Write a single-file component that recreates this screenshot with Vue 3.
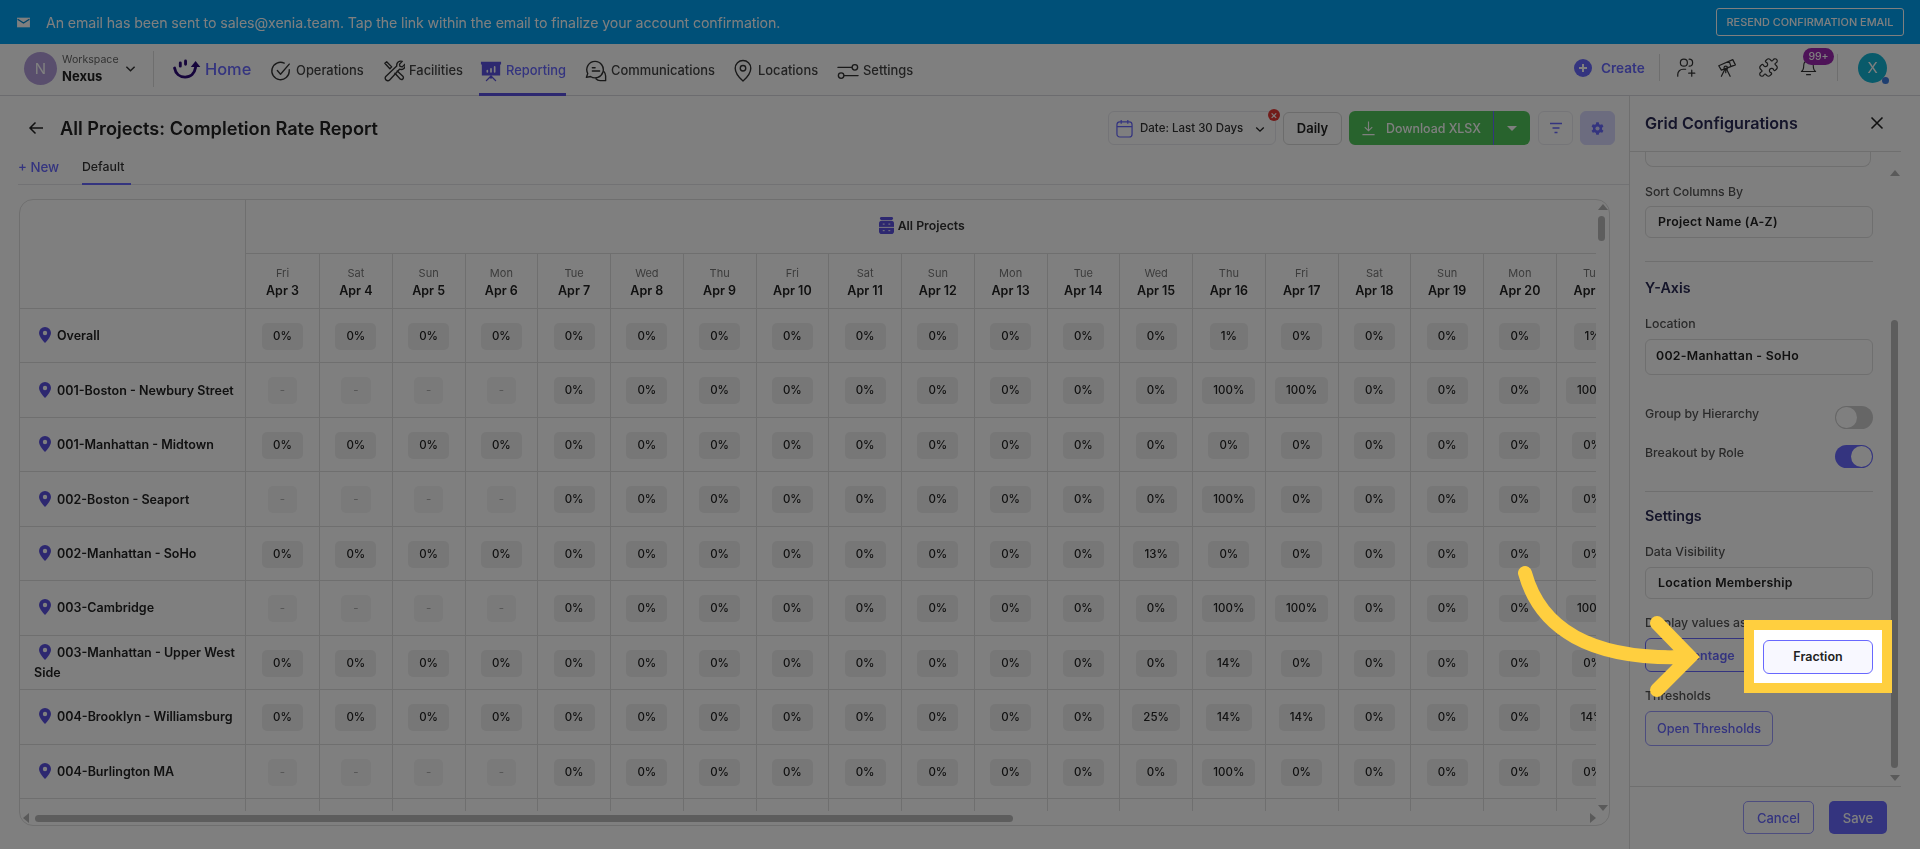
<template>
  <div class="app">
    <div class="page">
      <!-- banner -->
      <div class="banner">
        <svg class="mail" viewBox="0 0 14 14"><path d="M1 2.5h12v9H1z" fill="#fff" /><path d="M1.5 4l5.5 3.5L12.5 4" fill="none" stroke="#0288d1" stroke-width="1.3" /></svg>
        <span class="banner-text">An email has been sent to sales@xenia.team. Tap the link within the email to finalize your account confirmation.</span>
        <button class="resend">RESEND CONFIRMATION EMAIL</button>
      </div>

      <!-- top nav -->
      <header class="nav">
        <div class="workspace">
          <div class="ws-avatar">N</div>
          <div class="ws-text">
            <div class="ws-label">Workspace</div>
            <div class="ws-name">Nexus</div>
          </div>
          <svg class="ws-chev" viewBox="0 0 12 8"><path d="M1.5 1.5L6 6l4.5-4.5" /></svg>
        </div>
        <div class="home">
          <svg class="home-icon" viewBox="0 0 30 22">
            <path d="M2.5 9.5c1 6 5.5 9.500 11 9.500 6 0 10-4 11-10" />
            <path d="M8.5 4v3.5M14 2v3.500" />
            <path class="home-head" d="M24.5 2l5 6.5h-10z" />
          </svg>
          <span>Home</span>
        </div>
        <div
          v-for="item in navItems"
          :key="item.label"
          class="nav-item"
          :class="{ active: item.active }"
          :style="{ width: item.width + 'px' }"
        >
          <svg class="nav-icon" viewBox="0 0 24 24">
            <path v-for="d in item.icon" :key="d" :d="d" />
            <path v-for="d in item.solid || []" :key="d" :d="d" class="solid" />
            <path v-for="d in item.cut || []" :key="d" :d="d" class="cut" />
          </svg>
          <span>{{ item.label }}</span>
        </div>

        <div class="nav-right">
          <svg class="create-icon" viewBox="0 0 18 18"><circle cx="9" cy="9" r="9" /><path d="M9 5v8M5 9h8" /></svg>
          <span class="create">Create</span>
          <div class="nav-sep"></div>
          <svg class="tool" viewBox="0 0 24 24"><circle cx="9" cy="6.5" r="4" /><path d="M15 2.5a4 4 0 0 1 0 8M2 22v-2a6 6 0 0 1 6-6h3M18 15v7M14.5 18.5h7" /></svg>
          <svg class="tool" viewBox="0 0 24 24"><path d="M2 10l16-7 3 6-16 6zM14 5l2 6M11 14l4 8M9 14l-4 8M10 15v3" /><circle cx="10" cy="12.5" r="2" /></svg>
          <svg class="tool" viewBox="0 0 24 24"><path d="M19.439 7.85c-.049.322.059.648.289.878l1.568 1.568c.47.47.706 1.087.706 1.704s-.235 1.233-.706 1.704l-1.611 1.611a.98.98 0 0 1-.837.276c-.47-.07-.802-.48-.968-.925a2.501 2.501 0 1 0-3.214 3.214c.446.166.855.497.925.968a.979.979 0 0 1-.276.837l-1.61 1.61a2.404 2.404 0 0 1-1.705.707 2.402 2.402 0 0 1-1.704-.706l-1.568-1.568a1.026 1.026 0 0 0-.877-.29c-.493.074-.84.504-1.02.968a2.5 2.5 0 1 1-3.237-3.237c.464-.18.894-.527.967-1.02a1.026 1.026 0 0 0-.289-.877l-1.568-1.568A2.402 2.402 0 0 1 1.998 12c0-.617.236-1.234.706-1.704L4.23 8.77c.24-.24.581-.353.917-.303.515.077.877.528 1.073 1.01a2.5 2.5 0 1 0 3.259-3.259c-.482-.196-.933-.558-1.01-1.073-.05-.336.062-.676.303-.917l1.525-1.525A2.402 2.402 0 0 1 12 1.998c.617 0 1.234.236 1.704.706l1.568 1.568c.23.23.556.338.877.29.493-.074.84-.504 1.02-.968a2.5 2.5 0 1 1 3.237 3.237c-.464.18-.894.527-.967 1.02Z" /></svg>
          <div class="bell">
            <svg class="tool" viewBox="0 0 24 24"><path d="M12 3a6 6 0 0 0-6 6c0 6-3 8-3 8h18s-3-2-3-8a6 6 0 0 0-6-6zM9.5 21h5" /></svg>
            <span class="badge">99+</span>
          </div>
          <div class="nav-sep last"></div>
          <div class="user">X<span class="user-dot"></span></div>
        </div>
      </header>

      <div class="content">
        <main class="main">
          <div class="title-row">
            <svg class="back" viewBox="0 0 16 14"><path d="M15 7H2M7.5 1.500L2 7l5.500 5.500" /></svg>
            <h1>All Projects: Completion Rate Report</h1>
            <div class="date-box">
              <svg class="cal" viewBox="0 0 18 20"><rect x="1" y="3" width="16" height="16" rx="3" /><path d="M1 8h16M5.500 1v4M12.500 1v4" /></svg>
              <span>Date: Last 30 Days</span>
              <svg class="date-chev" viewBox="0 0 12 8"><path d="M1.5 1.5L6 6l4.5-4.5" /></svg>
              <span class="clear">×</span>
            </div>
            <button class="daily">Daily</button>
            <div class="download">
              <div class="dl-main">
                <svg class="dl-icon" viewBox="0 0 16 16"><path d="M8 1v9.500M4 7l4 4 4-4M1.500 15h13" /></svg>
                Download XLSX
              </div>
              <div class="dl-caret"><i></i></div>
            </div>
            <button class="icon-btn">
              <svg viewBox="0 0 14 12"><path d="M1 1.5h12M3.5 6h7M5.5 10.500h3" /></svg>
            </button>
            <button class="icon-btn gear">
              <svg viewBox="0 0 24 24"><path d="M10 2h4l.6 3 2 1.1 2.9-1 2 3.500-2.300 2v2.800l2.300 2-2 3.500-2.900-1-2 1.100-.6 3h-4l-.6-3-2-1.100-2.900 1-2-3.500 2.300-2v-2.800l-2.300-2 2-3.500 2.900 1 2-1.100z" /><circle cx="12" cy="12" r="3.3" class="gear-hole" /></svg>
            </button>
          </div>

          <div class="tabs">
            <span class="tab-new">+ New</span>
            <span class="tab-default">Default</span>
          </div>

          <section class="card">
            <div class="scroller">
              <div class="grid">
                <div class="corner"></div>
                <div class="group-head">
                  <svg class="stack" viewBox="0 0 16 18"><rect x="1" y="0" width="14" height="3" rx="1.5" /><rect x="0" y="4" width="16" height="14" rx="3" /><path class="stack-cut" d="M0 11h16M4 7.5h2M4 14.5h2M10 7.5h2M10 14.5h2" /></svg>
                  All Projects
                </div>
                <div v-for="d in days" :key="d.date" class="day-head">
                  <div class="day">{{ d.day }}</div>
                  <div class="date">{{ d.date }}</div>
                </div>
                <template v-for="row in rows" :key="row.name">
                  <div class="loc">
                    <div class="loc-name">
                      <svg class="pin" viewBox="0 0 12 16"><path d="M6 0a6 6 0 0 0-6 6c0 4 6 10 6 10s6-6 6-10a6 6 0 0 0-6-6z" /><circle cx="6" cy="6" r="2.2" /></svg>{{ row.name }}
                    </div>
                  </div>
                  <div v-for="(v, i) in row.values" :key="i" class="cell">
                    <span class="pill" :class="{ none: v === '-' }">{{ v }}</span>
                  </div>
                </template>
                <div class="loc"></div>
                <div v-for="d in days" :key="d.date + 'x'" class="cell"></div>
              </div>
            </div>
            <div class="vrail">
              <i class="arrow up"></i>
              <div class="vthumb"></div>
              <i class="arrow down"></i>
            </div>
            <div class="hrail">
              <i class="arrow left"></i>
              <div class="hthumb"></div>
              <i class="arrow right"></i>
            </div>
          </section>
        </main>

        <!-- config panel -->
        <aside class="panel">
          <div class="panel-head">
            <span>Grid Configurations</span>
            <svg class="close" viewBox="0 0 14 14"><path d="M1.5 1.5l11 11M12.5 1.5l-11 11" /></svg>
          </div>
          <div class="panel-body">
            <div class="form">
              <div class="clipped"></div>
              <div class="label sort">Sort Columns By</div>
              <div class="select first">Project Name (A-Z)</div>
              <div class="divider d1"></div>
              <div class="section yaxis">Y-Axis</div>
              <div class="label loc-label">Location</div>
              <div class="select tall">002-Manhattan - SoHo</div>
              <div class="toggle-row group">
                <span class="label">Group by Hierarchy</span>
                <span class="toggle"></span>
              </div>
              <div class="toggle-row breakout">
                <span class="label">Breakout by Role</span>
                <span class="toggle on"></span>
              </div>
              <div class="divider d2"></div>
              <div class="section settings">Settings</div>
              <div class="label vis">Data Visibility</div>
              <div class="select first">Location Membership</div>
              <div class="label disp">Display values as</div>
              <div class="seg">
                <button class="seg-btn">Percentage</button>
                <button class="seg-btn blank"></button>
              </div>
              <div class="label disp">Thresholds</div>
              <button class="open-btn">Open Thresholds</button>
            </div>
            <div class="prail">
              <i class="arrow up"></i>
              <div class="pthumb"></div>
              <i class="arrow down"></i>
            </div>
          </div>
          <div class="panel-foot">
            <button class="cancel">Cancel</button>
            <button class="save">Save</button>
          </div>
        </aside>
      </div>
    </div>

    <!-- dim layer + highlighted step -->
    <div class="dim"></div>
    <svg class="pointer" viewBox="0 0 1920 849">
      <path d="M1525 573C1540 628 1590 660 1685 657M1657 623l33 34-33 33" />
    </svg>
    <div class="spot">
      <button class="fraction">Fraction</button>
    </div>
  </div>
</template>

<script setup>
const navItems = [
  {
    label: 'Operations',
    width: 113,
    icon: ['M21 10.5V12a9.5 9.5 0 1 1-5.5-8.6', 'M8 11.5l3.5 4L21 4.5'],
  },
  {
    label: 'Facilities',
    width: 97,
    icon: [
      'M2 3.5L4 2l5.5 5.5-2 2zM13 14.5l6 6.5a2.2 2.2 0 0 0 3-3l-6.500-6',
      'M15 6.5a4.5 4.5 0 0 1 6-5l-3 3 .5 2.5 2.5.5 3-3a4.5 4.5 0 0 1-6 5.5L7.5 21.5a2.7 2.7 0 0 1-4.5-3.5z',
    ],
  },
  {
    label: 'Reporting',
    width: 105,
    active: true,
    icon: ['M12 17v3M7 22.5l5-5 5 5'],
    solid: ['M1 2h22v3h-1v12H2V5H1z'],
    cut: ['M8 13v-1.5M12 13V9.5M16 13V7.5'],
  },
  {
    label: 'Communications',
    width: 147,
    icon: [
      'M11 1.5a9 9 0 0 0-8 13.2L1.500 19l4.500-1A9 9 0 1 0 11 1.500z',
      'M8 8.5h3M8 12h8',
      'M20.5 12.5c1 1 2 3 2 5v5h-6c-2 0-3.500-.7-4.500-2',
    ],
  },
  {
    label: 'Locations',
    width: 105,
    icon: ['M12 23s8.5-7.5 8.5-14a8.5 8.5 0 1 0-17 0c0 6.5 8.5 14 8.5 14z', 'M15 9a3 3 0 1 1-6 0 3 3 0 0 1 6 0z'],
  },
  {
    label: 'Settings',
    width: 82,
    icon: ['M1 8h15M22.5 8a3 3 0 1 1-6 0 3 3 0 0 1 6 0z', 'M23 17H8M7.5 17a3 3 0 1 1-6 0 3 3 0 0 1 6 0z'],
  },
]

const names = ['Fri', 'Sat', 'Sun', 'Mon', 'Tue', 'Wed', 'Thu']
const days = Array.from({ length: 19 }, (_, i) => ({
  day: names[i % 7],
  date: 'Apr ' + (i + 3),
}))

// values that are not 0%, keyed by the date number
const makeRow = (name, empty, special = {}) => ({
  name,
  values: days.map((_, i) => {
    const date = i + 3
    if (empty && date < 7) return '-'
    return special[date] || '0%'
  }),
})

const rows = [
  makeRow('Overall', false, { 16: '1%', 21: '1%' }),
  makeRow('001-Boston - Newbury Street', true, { 16: '100%', 17: '100%', 21: '100%' }),
  makeRow('001-Manhattan - Midtown', false),
  makeRow('002-Boston - Seaport', true, { 16: '100%' }),
  makeRow('002-Manhattan - SoHo', false, { 15: '13%' }),
  makeRow('003-Cambridge', true, { 16: '100%', 17: '100%', 21: '100%' }),
  makeRow('003-Manhattan - Upper West Side', false, { 16: '14%' }),
  makeRow('004-Brooklyn - Williamsburg', false, { 15: '25%', 16: '14%', 17: '14%', 21: '14%' }),
  makeRow('004-Burlington MA', true, { 16: '100%' }),
]
</script>

<style>
html, body {
  margin: 0;
  background: #808080;
}
</style>

<style scoped>
.app {
  position: relative;
  width: 1920px;
  height: 849px;
  overflow: hidden;
  font-family: Inter, "Open Sans", sans-serif;
  color: #222;
}
.page {
  width: 1920px;
  height: 849px;
  display: flex;
  flex-direction: column;
  background: #fff;
  filter: blur(0.6px);
}
button {
  font-family: inherit;
  background: #fff;
  cursor: pointer;
  padding: 0;
}

/* banner */
.banner {
  height: 44px;
  flex: none;
  box-sizing: border-box;
  background: #00a0f0;
  display: flex;
  align-items: center;
  padding: 0 16px;
  color: #fff;
}
.mail {
  width: 15px;
  height: 15px;
}
.banner-text {
  margin-left: 15px;
  font-size: 14.2px;
  letter-spacing: -0.1px;
}
.resend {
  margin-left: auto;
  width: 188px;
  height: 28px;
  background: transparent;
  border: 1px solid #fff;
  border-radius: 3px;
  color: #fff;
  font-size: 10.9px;
  font-weight: 500;
}

/* nav */
.nav {
  height: 52px;
  flex: none;
  box-sizing: border-box;
  border-bottom: 1px solid #d8d8de;
  display: flex;
  align-items: center;
  padding-left: 24px;
}
.workspace {
  display: flex;
  align-items: center;
  width: 129px;
  height: 36px;
  border-right: 1px solid #ddd;
  margin-top: -2px;
}
.ws-avatar {
  width: 33px;
  height: 33px;
  border-radius: 50%;
  background: #b39ddb;
  color: #fff;
  font-size: 15px;
  display: flex;
  align-items: center;
  justify-content: center;
  flex: none;
}
.ws-text {
  margin-left: 5px;
  width: 62px;
}
.ws-label {
  font-size: 10.6px;
  color: #666;
  line-height: 15px;
}
.ws-name {
  font-size: 13px;
  font-weight: 700;
  line-height: 18px;
  color: #222;
}
.ws-chev {
  width: 11px;
  height: 8px;
  margin-left: 1px;
  fill: none;
  stroke: #333;
  stroke-width: 1.6;
}
.home {
  display: flex;
  align-items: center;
  margin-left: 18px;
  width: 98px;
  font-size: 16.4px;
  font-weight: 500;
  color: #6868fe;
  margin-top: -1px;
}
.home-icon {
  width: 29px;
  height: 21px;
  margin-right: 4px;
  fill: none;
  stroke: #2c0a78;
  stroke-width: 3;
  stroke-linecap: round;
}
.home-head {
  fill: #2c0a78;
  stroke: none;
}
.nav-item {
  height: 51px;
  margin-top: 1px;
  padding-top: 1px;
  box-sizing: border-box;
  display: flex;
  align-items: center;
  font-size: 12.9px;
  font-weight: 500;
  color: #444;
  position: relative;
}
.nav-icon {
  width: 22px;
  height: 24px;
  flex: none;
  margin-right: 4px;
  fill: none;
  stroke: #333;
  stroke-width: 1.5;
  stroke-linecap: round;
  stroke-linejoin: round;
}
.nav-icon .solid {
  fill: #5a50e0;
  stroke: none;
}
.nav-icon .cut {
  stroke: #fff;
  stroke-width: 1.8;
}
.nav-item.active {
  color: #6868fe;
}
.nav-item.active .nav-icon {
  stroke: #5a50e0;
}
.nav-item.active::after {
  content: "";
  position: absolute;
  left: -1px;
  bottom: 0;
  width: 87px;
  height: 3px;
  background: #5a50e0;
}
.nav-right {
  margin-left: auto;
  display: flex;
  align-items: center;
  margin-top: -4px;
  padding-right: 33px;
}
.create-icon {
  width: 18px;
  height: 18px;
}
.create-icon circle {
  fill: #6868fe;
}
.create-icon path {
  stroke: #fff;
  stroke-width: 2;
}
.create {
  margin-left: 9px;
  font-size: 13.6px;
  font-weight: 600;
  color: #6868fe;
  width: 46px;
}
.nav-sep {
  width: 1px;
  height: 27px;
  background: #ddd;
  margin: 0 16px 0 12px;
}
.nav-sep.last {
  margin: 0 20px;
}
.tool {
  width: 21px;
  height: 21px;
  margin-right: 20px;
  fill: none;
  stroke: #333;
  stroke-width: 1.4;
  stroke-linecap: round;
  stroke-linejoin: round;
}
.bell {
  position: relative;
  width: 18px;
  height: 21px;
}
.bell .tool {
  margin: 0;
  width: 19px;
}
.badge {
  position: absolute;
  left: 4px;
  top: -9px;
  width: 31px;
  height: 17px;
  border-radius: 9px;
  background: #9c27b0;
  color: #fff;
  font-size: 10.5px;
  font-weight: 500;
  line-height: 17px;
  text-align: center;
}
.user {
  position: relative;
  width: 29px;
  height: 30px;
  border-radius: 50%;
  background: #12b5d5;
  color: #fff;
  font-size: 15px;
  display: flex;
  align-items: center;
  justify-content: center;
}
.user-dot {
  position: absolute;
  right: -2px;
  bottom: -1px;
  width: 7px;
  height: 7px;
  border-radius: 50%;
  background: #3c7de0;
}

/* main area */
.content {
  flex: 1;
  display: flex;
  min-height: 0;
}
.main {
  width: 1629px;
  flex: none;
  display: flex;
  flex-direction: column;
}
.title-row {
  height: 34px;
  margin-top: 15px;
  display: flex;
  align-items: center;
  padding: 0 14px 0 28px;
}
.back {
  width: 16px;
  height: 14px;
  fill: none;
  stroke: #222;
  stroke-width: 1.5;
}
h1 {
  margin: 0 0 0 16px;
  font-size: 18.2px;
  font-weight: 600;
  color: #222;
  flex: 1;
}
.date-box {
  position: relative;
  width: 168px;
  height: 34px;
  box-sizing: border-box;
  border: 1px solid #e8e8ee;
  border-radius: 6px;
  display: flex;
  align-items: center;
  padding-left: 7px;
  font-size: 11.5px;
  font-weight: 500;
  color: #333;
}
.cal {
  width: 17px;
  height: 19px;
  margin-right: 7px;
  fill: none;
  stroke: #6868fe;
  stroke-width: 1.3;
}
.date-chev {
  width: 10px;
  height: 7px;
  position: absolute;
  right: 10px;
  top: 14px;
  fill: none;
  stroke: #222;
  stroke-width: 1.6;
}
.clear {
  position: absolute;
  right: -5px;
  top: -3px;
  width: 12px;
  height: 12px;
  border-radius: 50%;
  background: #e53935;
  color: #fff;
  font-size: 11px;
  line-height: 12px;
  text-align: center;
}
.daily {
  margin-left: 7px;
  width: 59px;
  height: 33px;
  border: 1px solid #d8d8d8;
  border-radius: 6px;
  font-size: 13px;
  font-weight: 600;
  color: #222;
}
.download {
  margin-left: 7px;
  width: 181px;
  height: 34px;
  display: flex;
  border-radius: 6px;
  overflow: hidden;
  background: #50c65a;
  color: #fff;
  font-size: 12.4px;
  font-weight: 500;
}
.dl-main {
  width: 145px;
  display: flex;
  align-items: center;
  padding-left: 12px;
  box-sizing: border-box;
  border-right: 1px solid #6868fe;
}
.dl-icon {
  width: 15px;
  height: 16px;
  margin-right: 10px;
  fill: none;
  stroke: #fff;
  stroke-width: 1.2;
}
.dl-caret {
  flex: 1;
  display: flex;
  align-items: center;
  justify-content: center;
}
.dl-caret i {
  border: 5px solid transparent;
  border-top: 5px solid #fff;
  margin-top: 5px;
}
.icon-btn {
  margin-left: 8px;
  width: 35px;
  height: 34px;
  border: 1px solid #ebebf0;
  border-radius: 6px;
  display: flex;
  align-items: center;
  justify-content: center;
}
.icon-btn svg {
  width: 14px;
  height: 12px;
  fill: none;
  stroke: #6868fe;
  stroke-width: 1.5;
}
.icon-btn.gear {
  margin-left: 7px;
  background: #d8d8ff;
  border-color: #d8d8ff;
}
.icon-btn.gear svg {
  width: 15px;
  height: 15px;
  fill: #6868fe;
  stroke: none;
}
.gear-hole {
  fill: #d8d8ff;
}
.tabs {
  height: 36px;
  margin: 4px 0 0 18px;
  box-sizing: border-box;
  border-bottom: 1px solid #e4e4e8;
  display: flex;
  align-items: center;
  font-size: 13.3px;
  font-weight: 500;
}
.tab-new {
  color: #6868fe;
  width: 64px;
}
.tab-default {
  height: 36px;
  box-sizing: border-box;
  width: 49px;
  line-height: 36px;
  border-bottom: 2px solid #6868fe;
  color: #333;
  font-size: 12.3px;
}

/* table */
.card {
  margin: 14px 0 0 19px;
  width: 1591px;
  height: 627px;
  box-sizing: border-box;
  border: 1px solid #dedede;
  border-radius: 14px;
  overflow: hidden;
  display: grid;
  grid-template-columns: 1576px 1fr;
  grid-template-rows: 611px 1fr;
}
.scroller {
  overflow: hidden;
}
.grid {
  display: grid;
  grid-template-columns: 226px 74px repeat(18, 72.75px);
  grid-template-rows: 54px 55px repeat(10, 54.45px);
}
.corner {
  grid-row: span 2;
  border-right: 1px solid #dedede;
  border-bottom: 1px solid #dedede;
}
.group-head {
  grid-column: span 19;
  display: flex;
  align-items: center;
  justify-content: center;
  padding: 0 32px 3px 0;
  font-size: 12.3px;
  font-weight: 600;
  color: #333;
  border-bottom: 1px solid #dedede;
}
.stack {
  width: 15px;
  height: 17px;
  margin-right: 4px;
  fill: #5a50e0;
}
.stack-cut {
  stroke: #fff;
  stroke-width: 1;
}
.day-head {
  text-align: center;
  border-right: 1px solid #dedede;
  border-bottom: 1px solid #dedede;
  padding-top: 10px;
  box-sizing: border-box;
}
.day {
  font-size: 11px;
  color: #777;
  line-height: 18px;
}
.date {
  font-size: 12.5px;
  font-weight: 600;
  color: #222;
  line-height: 18px;
}
.loc {
  border-right: 1px solid #dedede;
  border-bottom: 1px solid #dedede;
  display: flex;
  align-items: center;
  padding: 1px 8px 0 14px;
  box-sizing: border-box;
}
.loc-name {
  font-size: 12.5px;
  font-weight: 600;
  line-height: 20px;
  color: #222;
}
.pin {
  width: 12px;
  height: 16px;
  margin: 0 6px -3px 5px;
  fill: #5a50e0;
}
.pin circle {
  fill: #fff;
}
.cell {
  border-right: 1px solid #dedede;
  border-bottom: 1px solid #dedede;
  display: flex;
  align-items: flex-start;
  justify-content: center;
  padding-top: 14px;
  box-sizing: border-box;
}
.pill {
  height: 27px;
  line-height: 27px;
  padding: 0 11px;
  border-radius: 5px;
  background: #efefef;
  font-size: 11.5px;
  font-weight: 500;
  color: #222;
  white-space: nowrap;
}
.pill.none {
  padding: 0 12px;
  background: #f4f4f4;
  color: #aaa;
  font-weight: 400;
}
.vrail {
  grid-row: 1;
  grid-column: 2;
  padding: 4px 0 0 2px;
  display: flex;
  flex-direction: column;
  align-items: flex-start;
}
.vthumb {
  width: 7px;
  height: 25px;
  margin-top: 6px;
  background: #bbb;
  border-radius: 4px;
}
.vrail .arrow.down {
  margin-top: auto;
}
.hrail {
  grid-row: 2;
  grid-column: 1;
  display: flex;
  align-items: center;
  padding: 0 0 0 3px;
}
.hthumb {
  width: 978px;
  height: 7px;
  margin-left: 6px;
  background: #bbb;
  border-radius: 4px;
}
.hrail .arrow.right {
  margin-left: auto;
}
.arrow {
  display: block;
  width: 0;
  height: 0;
  border: 5px solid transparent;
}
.arrow.up {
  border-top: 0;
  border-bottom: 6px solid #b5b5b5;
}
.arrow.down {
  border-bottom: 0;
  border-top: 6px solid #b5b5b5;
}
.arrow.left {
  border-left: 0;
  border-right: 6px solid #b5b5b5;
}
.arrow.right {
  border-right: 0;
  border-left: 6px solid #b5b5b5;
}

/* panel */
.panel {
  width: 291px;
  flex: none;
  box-sizing: border-box;
  border-left: 1px solid #dedede;
  display: flex;
  flex-direction: column;
}
.panel-head {
  height: 56px;
  flex: none;
  box-sizing: border-box;
  width: 271px;
  padding: 0 17px 2px 15px;
  border-bottom: 1px solid #dedede;
  display: flex;
  align-items: center;
  justify-content: space-between;
  font-size: 16.1px;
  font-weight: 600;
  color: #2a2a55;
}
.close {
  width: 14px;
  height: 14px;
  fill: none;
  stroke: #222;
  stroke-width: 1.6;
}
.panel-body {
  flex: 1;
  min-height: 0;
  display: flex;
}
.form {
  width: 228px;
  margin-left: 15px;
}
.clipped {
  width: 226px;
  height: 15px;
  border: 1px solid #dedede;
  border-top: 0;
  border-radius: 0 0 8px 8px;
  box-sizing: border-box;
}
.label {
  font-size: 12.3px;
  font-weight: 500;
  line-height: 16px;
  color: #555;
}
.sort {
  margin-top: 17px;
}
.select {
  box-sizing: border-box;
  border: 1px solid #dedede;
  border-radius: 6px;
  height: 32px;
  margin-top: 6px;
  line-height: 30px;
  padding-left: 12px;
  font-size: 12.3px;
  font-weight: 600;
  color: #222;
  letter-spacing: 0.3px;
}
.select.tall {
  height: 36px;
  line-height: 32px;
  padding-left: 10px;
  margin-top: 7px;
  letter-spacing: 0.3px;
}
.divider {
  height: 1px;
  background: #dedede;
}
.d1 {
  margin-top: 23px;
}
.d2 {
  margin-top: 23px;
}
.section {
  font-size: 14.3px;
  font-weight: 600;
  line-height: 20px;
  color: #2a2a55;
}
.yaxis {
  margin-top: 16px;
}
.loc-label {
  margin-top: 18px;
}
.toggle-row {
  height: 24px;
  display: flex;
  justify-content: space-between;
  align-items: center;
}
.toggle-row .label {
  margin-top: -6px;
}
.group {
  margin-top: 30px;
}
.breakout {
  margin-top: 15px;
}
.toggle {
  width: 38px;
  height: 23px;
  border-radius: 12px;
  background: #ccc;
  position: relative;
  box-sizing: border-box;
}
.toggle::after {
  content: "";
  position: absolute;
  left: 1px;
  top: 1px;
  width: 21px;
  height: 21px;
  border-radius: 50%;
  background: #fff;
}
.toggle.on {
  background: #6868fe;
}
.toggle.on::after {
  left: 16px;
}
.settings {
  margin-top: 14px;
}
.vis {
  margin-top: 18px;
}
.vis + .select {
  margin-top: 7px;
}
.disp {
  margin-top: 16px;
}
.seg {
  margin-top: 7px;
  display: flex;
  gap: 8px;
}
.seg + .disp {
  margin-top: 16px;
}
.seg-btn {
  width: 110px;
  height: 34px;
  border: 1px solid #6868fe;
  border-radius: 6px;
  font-size: 12.5px;
  font-weight: 600;
  color: #6868fe;
  background: #fff;
}
.seg-btn.blank {
  border-color: transparent;
}
.open-btn {
  display: block;
  margin-top: 7px;
  width: 128px;
  height: 35px;
  border: 1px solid #9a9aff;
  border-radius: 6px;
  color: #6868fe;
  font-size: 12.7px;
  font-weight: 500;
}
.prail {
  margin-left: 18px;
  width: 7px;
  display: flex;
  flex-direction: column;
  align-items: center;
  padding-top: 18px;
}
.pthumb {
  width: 7px;
  height: 448px;
  margin-top: 144px;
  background: #bbb;
  border-radius: 4px;
  flex: none;
}
.prail .arrow.down {
  margin-top: 7px;
}
.panel-foot {
  height: 63px;
  flex: none;
  box-sizing: border-box;
  width: 271px;
  border-top: 1px solid #dedede;
  display: flex;
  justify-content: flex-end;
  gap: 15px;
  padding: 14px 14px 0 0;
}
.panel-foot button {
  height: 33px;
  border-radius: 5px;
  font-size: 13px;
  font-weight: 500;
}
.cancel {
  width: 71px;
  border: 1px solid #9a9aff;
  color: #6868fe;
}
.save {
  width: 58px;
  border: 0;
  background: #6868fe;
  color: #fff;
}

/* dim + highlight */
.dim {
  position: absolute;
  inset: 0;
  background: rgba(0, 0, 0, 0.5);
}
.pointer {
  position: absolute;
  left: 0;
  top: 0;
  width: 1920px;
  height: 849px;
  fill: none;
  stroke: #ffcf3f;
  stroke-width: 14;
  stroke-linecap: round;
  stroke-linejoin: miter;
}
.spot {
  position: absolute;
  left: 1744px;
  top: 620px;
  width: 148px;
  height: 73px;
  box-sizing: border-box;
  border: 10px solid #ffcf3f;
  background: #fff;
  display: flex;
  align-items: center;
  justify-content: center;
}
.fraction {
  width: 110px;
  height: 34px;
  border: 1px solid #6868fe;
  border-radius: 6px;
  background: #f8f8ff;
  font-size: 12.5px;
  font-weight: 600;
  color: #222;
}
</style>
